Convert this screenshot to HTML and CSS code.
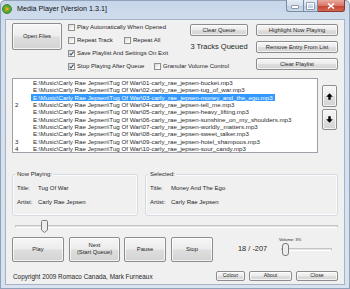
FILE: index.html
```html
<!DOCTYPE html>
<html>
<head>
<meta charset="utf-8">
<link rel="stylesheet" href="styles.css">
</head>
<body>
<div class="window">
  <div class="titlebar">
    <svg class="appicon" width="10" height="10" viewBox="0 0 10 10"><circle cx="5" cy="5" r="4.5" fill="#5aa832" stroke="#2f7a1c" stroke-width="0.8"/><path d="M3.6 2.6 L7.4 5 L3.6 7.4 Z" fill="#f5a623"/></svg>
    <span class="title">Media Player [Version 1.3.1]</span>
    <div class="caption">
      <span class="cbtn min"><span class="dash"></span></span>
      <span class="cbtn max"><span class="rect"></span></span>
      <span class="cbtn close"><svg width="8" height="6" viewBox="0 0 8 6"><path d="M1 0.5 L7 5.5 M7 0.5 L1 5.5" stroke="#fff" stroke-width="1.6"/></svg></span>
    </div>
  </div>
  <div class="client">
    <div class="top">
      <button class="btn open">Open Files</button>
      <div class="checks">
        <div class="crow"><span class="chk"><span class="box"></span>Play Automatically When Opened</span></div>
        <div class="crow"><span class="chk w56"><span class="box"></span>Repeat Track</span><span class="chk"><span class="box"></span>Repeat All</span></div>
        <div class="crow"><span class="chk"><span class="box"><svg width="5" height="5" viewBox="0 0 5 5"><path d="M0.6 2.6 L2 4 L4.5 0.6" stroke="#3c4f78" stroke-width="1.1" fill="none"/></svg></span>Save Playlist And Settings On Exit</span></div>
        <div class="crow"><span class="chk w86"><span class="box"><svg width="5" height="5" viewBox="0 0 5 5"><path d="M0.6 2.6 L2 4 L4.5 0.6" stroke="#3c4f78" stroke-width="1.1" fill="none"/></svg></span>Stop Playing After Queue</span><span class="chk"><span class="box"></span>Granular Volume Control</span></div>
      </div>
      <div class="queue">
        <button class="btn small">Clear Queue</button>
        <div class="queued">3 Tracks Queued</div>
      </div>
      <div class="actions">
        <button class="btn small">Highlight Now Playing</button>
        <button class="btn small">Remove Entry From List</button>
        <button class="btn small">Clear Playlist</button>
      </div>
    </div>

    <div class="listrow">
      <div class="list">
        <div class="lrow"><span class="num"></span><span class="path">E:\Music\Carly Rae Jepsen\Tug Of War\01-carly_rae_jepsen-bucket.mp3</span></div>
        <div class="lrow"><span class="num"></span><span class="path">E:\Music\Carly Rae Jepsen\Tug Of War\02-carly_rae_jepsen-tug_of_war.mp3</span></div>
        <div class="lrow"><span class="num"></span><span class="path sel">E:\Music\Carly Rae Jepsen\Tug Of War\03-carly_rae_jepsen-money_and_the_ego.mp3</span></div>
        <div class="lrow"><span class="num">2</span><span class="path">E:\Music\Carly Rae Jepsen\Tug Of War\04-carly_rae_jepsen-tell_me.mp3</span></div>
        <div class="lrow"><span class="num"></span><span class="path">E:\Music\Carly Rae Jepsen\Tug Of War\05-carly_rae_jepsen-heavy_lifting.mp3</span></div>
        <div class="lrow"><span class="num"></span><span class="path">E:\Music\Carly Rae Jepsen\Tug Of War\06-carly_rae_jepsen-sunshine_on_my_shoulders.mp3</span></div>
        <div class="lrow"><span class="num"></span><span class="path">E:\Music\Carly Rae Jepsen\Tug Of War\07-carly_rae_jepsen-worldly_matters.mp3</span></div>
        <div class="lrow"><span class="num"></span><span class="path">E:\Music\Carly Rae Jepsen\Tug Of War\08-carly_rae_jepsen-sweet_talker.mp3</span></div>
        <div class="lrow"><span class="num">3</span><span class="path">E:\Music\Carly Rae Jepsen\Tug Of War\09-carly_rae_jepsen-hotel_shampoos.mp3</span></div>
        <div class="lrow"><span class="num">4</span><span class="path">E:\Music\Carly Rae Jepsen\Tug Of War\10-carly_rae_jepsen-sour_candy.mp3</span></div>
      </div>
      <div class="arrows">
        <button class="btn arrow up"><svg width="7" height="7" viewBox="0 0 7 7"><path d="M3.5 0.3 L6.8 3.8 L4.7 3.8 L4.7 6.7 L2.3 6.7 L2.3 3.8 L0.2 3.8 Z" fill="#000"/></svg></button>
        <button class="btn arrow down"><svg width="7" height="7" viewBox="0 0 7 7"><path d="M3.5 6.7 L6.8 3.2 L4.7 3.2 L4.7 0.3 L2.3 0.3 L2.3 3.2 L0.2 3.2 Z" fill="#000"/></svg></button>
      </div>
    </div>

    <div class="groups">
      <fieldset class="group left">
        <legend>Now Playing:</legend>
        <div class="info"><span class="lbl">Title:</span><span>Tug Of War</span></div>
        <div class="info"><span class="lbl">Artist:</span><span>Carly Rae Jepsen</span></div>
      </fieldset>
      <fieldset class="group right">
        <legend>Selected:</legend>
        <div class="info"><span class="lbl">Title:</span><span>Money And The Ego</span></div>
        <div class="info"><span class="lbl">Artist:</span><span>Carly Rae Jepsen</span></div>
      </fieldset>
    </div>

    <div class="seek">
      <div class="track"></div>
      <svg class="thumb seek-thumb" width="7" height="13" viewBox="0 0 7 13"><path d="M1.5 0.5 H5.5 Q6.5 0.5 6.5 1.5 V10 L3.5 12.5 L0.5 10 V1.5 Q0.5 0.5 1.5 0.5 Z" fill="#ececec" stroke="#7a7a7a" stroke-width="1"/></svg>
    </div>

    <div class="controls">
      <button class="btn big play">Play</button>
      <button class="btn big next">Next<br>(Start Queue)</button>
      <button class="btn big pause">Pause</button>
      <button class="btn big stop">Stop</button>
      <div class="counter">18 / -207</div>
      <div class="volume">
        <div class="vlabel">Volume: 3%</div>
        <div class="vslider">
          <div class="track"></div>
          <svg class="thumb vol-thumb" width="8" height="13" viewBox="0 0 8 13"><rect x="0.5" y="0.5" width="6" height="12" rx="2.5" fill="#ececec" stroke="#7a7a7a" stroke-width="1"/></svg>
        </div>
      </div>
    </div>

    <div class="footer">
      <span class="copy">Copyright 2009 Romaco Canada, Mark Furneaux</span>
      <button class="btn tiny colour">Colour</button>
      <button class="btn tiny about">About</button>
      <button class="btn tiny closeb">Close</button>
    </div>
  </div>
</div>
</body>
</html>
```
FILE: styles.css
```css
html, body {
  margin: 0;
  padding: 0;
}
body {
  font-family: "Liberation Sans", Arial, sans-serif;
  font-size: 6px;
  color: #262626;
  width: 350px;
  height: 289px;
  overflow: hidden;
}
.window {
  width: 350px;
  height: 289px;
  box-sizing: border-box;
  background: linear-gradient(180deg, #c6d6ea 0px, #d3dfed 30px, #d8e3ef 100%);
  box-shadow: inset 0 0 0 1px #8fa2b9;
  border-radius: 5px 5px 0 0;
}
.titlebar {
  height: 19px;
  display: flex;
  align-items: flex-start;
}
.appicon {
  margin: 4px 0 0 2px;
  flex: none;
}
.title {
  margin: 5px 0 0 5px;
  font-size: 7.2px;
  line-height: 8px;
  color: #111;
}
.caption {
  margin-left: auto;
  margin-right: 5px;
  display: flex;
  height: 13px;
}
.cbtn {
  height: 12px;
  box-sizing: border-box;
  border: 1px solid #7b8da6;
  border-top: none;
  display: flex;
  align-items: center;
  justify-content: center;
}
.min {
  width: 17px;
  border-radius: 0 0 0 3px;
  background: linear-gradient(180deg, #e6edf5 0, #d4dfec 50%, #bfcee0 51%, #cbd8e8 100%);
  border-right: none;
}
.max {
  width: 15px;
  background: linear-gradient(180deg, #e6edf5 0, #d4dfec 50%, #bfcee0 51%, #cbd8e8 100%);
}
.close {
  width: 27px;
  border-left: none;
  border-color: #8b3a33;
  border-radius: 0 0 3px 0;
  background: linear-gradient(180deg, #e9a99e 0, #d9776a 50%, #c2402f 51%, #d3674f 100%);
}
.dash {
  width: 6px;
  height: 2px;
  background: #fff;
  box-shadow: 0 0 0 0.5px #4d5d72;
  margin-top: 3px;
}
.rect {
  width: 5px;
  height: 4px;
  border: 1px solid #fff;
  box-shadow: 0 0 0 0.5px #4d5d72;
}

.client {
  margin: 0 5px;
  height: 266px;
  box-sizing: border-box;
  border: 1px solid #a4b3c6;
  background: #f0f0f0;
}

.btn {
  font-family: "Liberation Sans", Arial, sans-serif;
  font-size: 5.8px;
  color: #262626;
  line-height: 1.15;
  padding: 0;
  margin: 0;
  box-sizing: border-box;
  border: 1px solid #8c8c8c;
  border-radius: 2px;
  background: linear-gradient(180deg, #f6f6f6 0%, #ececec 48%, #dedede 52%, #d3d3d3 100%);
  box-shadow: inset 0 0 0 1px rgba(255,255,255,0.7);
  display: flex;
  align-items: center;
  justify-content: center;
  text-align: center;
  white-space: nowrap;
}

.top {
  height: 58px;
  display: flex;
  align-items: flex-start;
  padding-left: 6px;
}
.open {
  margin-top: 3px;
  width: 50px;
  height: 27px;
  flex: none;
}
.checks {
  margin-left: 6px;
  margin-top: 0.5px;
  width: 122px;
  flex: none;
}
.crow {
  height: 13px;
  display: flex;
  align-items: center;
  white-space: nowrap;
}
.chk {
  display: flex;
  align-items: center;
  flex: none;
}
.w56 { width: 56px; }
.w86 { width: 86px; }
.box {
  width: 7px;
  height: 7px;
  box-sizing: border-box;
  border: 1px solid #8e8f8f;
  background: linear-gradient(135deg, #d8d8d8 0%, #f4f4f4 60%, #ffffff 100%);
  margin-right: 2px;
  display: flex;
  align-items: center;
  justify-content: center;
  flex: none;
}
.queue {
  width: 58px;
  flex: none;
  display: flex;
  flex-direction: column;
}
.small {
  height: 12px;
  width: 100%;
}
.queue .small { margin-top: 4px; }
.queued {
  margin-top: 7px;
  font-size: 7.5px;
  line-height: 8px;
  text-align: center;
  white-space: nowrap;
}
.actions {
  margin-left: 8px;
  width: 82px;
  flex: none;
  display: flex;
  flex-direction: column;
  gap: 5px;
  padding-top: 4px;
}

.listrow {
  display: flex;
  height: 75px;
  align-items: flex-start;
}
.list {
  margin-left: 6px;
  width: 306px;
  height: 75px;
  box-sizing: border-box;
  border: 1px solid #9ea2a8;
  background: #fff;
  overflow: hidden;
}
.lrow {
  height: 7.32px;
  display: flex;
  align-items: center;
  white-space: nowrap;
  font-size: 6.2px;
  line-height: 7.32px;
}
.num {
  width: 18px;
  flex: none;
  padding-left: 2px;
  box-sizing: border-box;
}
.path {
  padding: 0 2px;
  color: #2a2a2a;
}
.path.sel {
  background: #3399ff;
  color: #fff;
}
.arrows {
  margin-left: 4px;
  display: flex;
  flex-direction: column;
}
.arrow {
  width: 15px;
  height: 22px;
}
.arrow.up { margin-top: 7px; }
.arrow.down { margin-top: 2px; height: 21px; }

.groups {
  margin-top: 18px;
  display: flex;
  padding-left: 6px;
  gap: 7px;
}
.group {
  margin: 0;
  padding: 0 0 0 3px;
  height: 44.5px;
  box-sizing: border-box;
  border: 1px solid #d5dbe1;
  border-radius: 3px;
  box-shadow: inset 0 0 0 1px #fbfbfb;
  min-width: 0;
}
.group.left { width: 126px; }
.group.right { width: 193px; }
.group legend {
  padding: 0 1px;
  font-size: 6px;
  line-height: 7px;
}
.info {
  height: 14px;
  display: flex;
  align-items: center;
  white-space: nowrap;
  font-size: 6px;
}
.info:first-of-type { margin-top: 2.5px; }
.lbl {
  width: 21px;
  flex: none;
  padding-left: 1px;
}

.seek {
  position: relative;
  margin: 4px 0 0 9px;
  width: 323px;
  height: 13px;
}
.track {
  position: absolute;
  left: 0;
  right: 0;
  top: 5px;
  height: 3px;
  box-sizing: border-box;
  border: 1px solid #c4c4c4;
  border-bottom-color: #ffffff;
  background: #e3e3e3;
  border-radius: 1px;
}
.thumb {
  position: absolute;
  top: 0;
}
.seek-thumb { left: 26px; }

.controls {
  margin-top: 4px;
  height: 26px;
  display: flex;
  align-items: flex-start;
  padding-left: 6px;
}
.big { height: 25px; flex: none; }
.play { width: 52px; }
.next { width: 51px; margin-left: 5px; line-height: 1.2; }
.pause { width: 42px; margin-left: 4px; }
.stop { width: 42px; margin-left: 5px; }
.counter {
  margin-left: 25px;
  width: 36px;
  margin-top: 8px;
  font-size: 7.4px;
  line-height: 8px;
  white-space: nowrap;
}
.volume {
  margin-left: 5px;
  width: 55px;
  display: flex;
  flex-direction: column;
}
.vlabel {
  font-size: 4.2px;
  line-height: 5px;
  margin-top: 0;
  white-space: nowrap;
}
.vslider {
  position: relative;
  margin-left: 2px;
  margin-top: 1px;
  height: 13px;
  width: 51px;
}
.vslider .track { top: 5px; }
.vol-thumb { left: 1px; }

.footer {
  margin-top: 8px;
  height: 11px;
  display: flex;
  align-items: center;
  padding-left: 7px;
  padding-right: 6px;
}
.copy {
  white-space: nowrap;
  font-size: 6.4px;
}
.tiny {
  height: 10px;
  font-size: 5.2px;
}
.colour { margin-left: auto; width: 29px; }
.about { margin-left: 4px; width: 43px; }
.closeb { margin-left: 4px; width: 42px; }
```
